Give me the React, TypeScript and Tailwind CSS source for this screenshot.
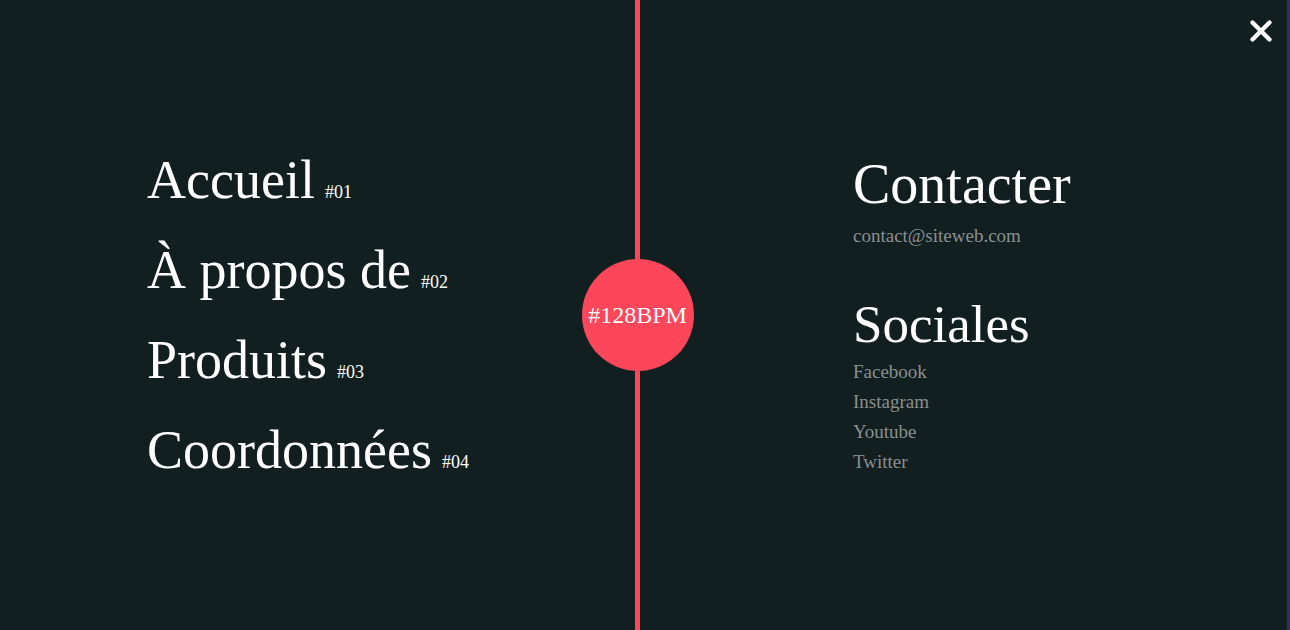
import { X } from "lucide-react";

const menu = [
  { label: "Accueil", num: "#01" },
  { label: "À propos de", num: "#02" },
  { label: "Produits", num: "#03" },
  { label: "Coordonnées", num: "#04" },
];

const socials = ["Facebook", "Instagram", "Youtube", "Twitter"];

export default function App() {
  return (
    <div className="relative flex h-[630px] w-full overflow-hidden border-r-[3px] border-[#392a66] bg-[#121f21] font-['Liberation_Serif',serif] text-white">
      {/* left: menu */}
      <nav className="w-[635px] pl-[147px] pt-[153px]">
        <ul className="flex flex-col gap-[36px]">
          {menu.map((item) => (
            <li key={item.num} className="flex items-baseline gap-[10px] leading-none">
              <span className="text-[54px]">{item.label}</span>
              <span className="text-[18px]">{item.num}</span>
            </li>
          ))}
        </ul>
      </nav>

      {/* divider with badge */}
      <div className="relative w-[5px] bg-[#fd4659]">
        <div className="absolute left-1/2 top-1/2 flex h-[112px] w-[112px] -translate-x-1/2 -translate-y-1/2 items-center justify-center rounded-full bg-[#fd4659] text-[24px]">
          #128BPM
        </div>
      </div>

      {/* right: contact */}
      <div className="flex-1 pl-[213px] pt-[156px]">
        <div className="flex flex-col">
          <h2 className="text-[56px] leading-none">Contacter</h2>
          <a className="mt-[14px] text-[19px] leading-none text-[#8a9090]">contact@siteweb.com</a>
          <h2 className="mt-[53px] text-[53px] leading-none">Sociales</h2>
          <ul className="mt-[11px] flex flex-col gap-[11px] text-[19px] leading-none text-[#8a9090]">
            {socials.map((s) => (
              <li key={s}>{s}</li>
            ))}
          </ul>
        </div>
      </div>

      <button className="absolute right-[9px] top-[14px] text-white" aria-label="Fermer">
        <X size={34} strokeWidth={3} />
      </button>
    </div>
  );
}
